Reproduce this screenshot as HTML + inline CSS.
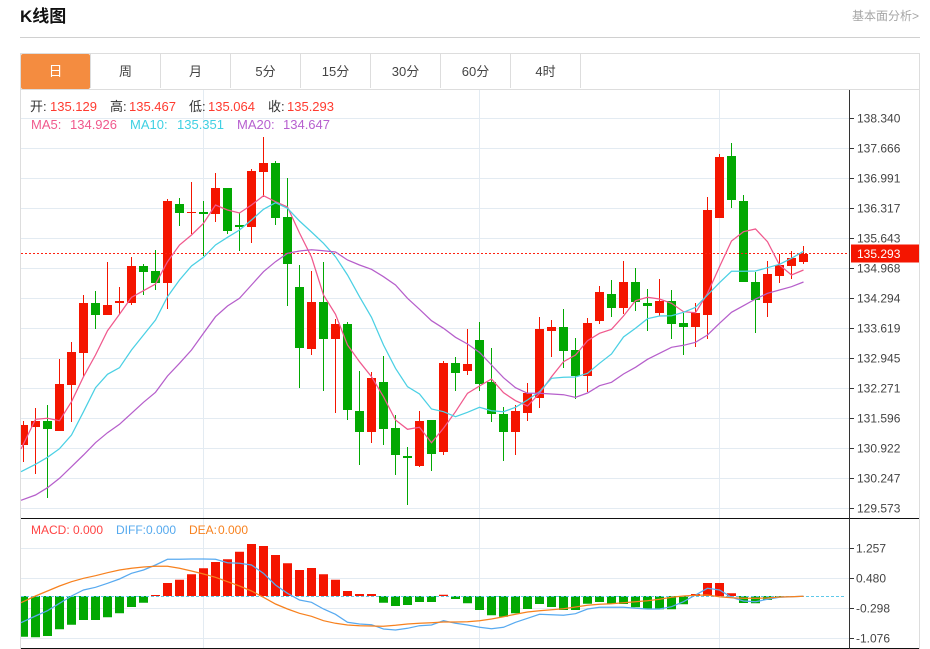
<!DOCTYPE html>
<html lang="zh">
<head>
<meta charset="utf-8">
<title>K线图</title>
<style>
html,body{margin:0;padding:0;background:#fff;width:930px;height:649px;overflow:hidden}
body{position:relative;font-family:"Liberation Sans","Noto Sans CJK SC",sans-serif}
.a{position:absolute;white-space:nowrap}
.tab{position:absolute;top:54px;height:34px;width:69px;line-height:35px;text-align:center;font-size:13px;color:#444;border-right:1px solid #ddd}
svg{position:absolute;left:0;top:0}
svg text{font-family:"Liberation Sans","Noto Sans CJK SC",sans-serif}
</style>
</head>
<body>
<div class="a" style="left:20px;top:5px;font-size:17px;font-weight:bold;line-height:24px;color:#111">K线图</div>
<div class="a" style="right:11px;top:8px;font-size:12px;line-height:16px;color:#a6a6a6">基本面分析&gt;</div>
<div class="a" style="left:20px;top:37px;width:900px;height:1px;background:#d0d0d0"></div>
<div class="a" style="left:20px;top:53px;width:898px;height:35px;border:1px solid #ddd;border-bottom:1px solid #ddd"></div>
<div class="a" style="left:21px;top:54px;width:69px;height:35px;background:#f48c40;border-radius:2px"></div>
<div class="tab" style="left:21px;color:#fff;border-right:1px solid #ddd;font-size:14px">日</div>
<div class="tab" style="left:91px">周</div>
<div class="tab" style="left:161px">月</div>
<div class="tab" style="left:231px">5分</div>
<div class="tab" style="left:301px">15分</div>
<div class="tab" style="left:371px">30分</div>
<div class="tab" style="left:441px">60分</div>
<div class="tab" style="left:511px">4时</div>

<svg width="930" height="649" viewBox="0 0 930 649" xmlns="http://www.w3.org/2000/svg">
<path d="M20.5 89V649M919.5 89V649" stroke="#ddd" fill="none"/>
<path d="M21 118.5H849M21 148.5H849M21 178.5H849M21 208.5H849M21 238.5H849M21 268.5H849M21 298.5H849M21 328.5H849M21 358.5H849M21 388.5H849M21 418.5H849M21 448.5H849M21 478.5H849M21 508.5H849M21 548.5H849M21 578.5H849M21 608.5H849M21 638.5H849M203.5 90V648M479.5 90V648M719.5 90V648" stroke="#e3ebf2" fill="none"/>

<!-- red wicks -->
<path fill="none" stroke="#f41500" d="M23.5 421V462M35.5 408V474M59.5 359V384M71.5 342V422M83.5 295V377M107.5 262V315M119.5 287V314M131.5 257V305M167.5 199V309M191.5 182V234M215.5 173V222M251.5 169V243M263.5 137V197M311.5 271V355M335.5 319V413M371.5 372V443M419.5 411V467M443.5 361V455M467.5 329V375M515.5 405V455M527.5 383V421M539.5 317V408M551.5 320V357M587.5 318V392M599.5 286V324M623.5 261V314M659.5 279V316M695.5 303V347M707.5 197V339M719.5 154V218M767.5 261V317M779.5 254V283M791.5 251V279M803.5 246V264"/>
<!-- green wicks -->
<path fill="none" stroke="#02a802" d="M47.5 405V498M95.5 291V329M143.5 264V295M155.5 250V290M179.5 198V226M203.5 201V256M227.5 188V234M239.5 213V251M275.5 161V225M287.5 178V306M299.5 265V388M323.5 262V391M347.5 322V420M359.5 371V465M383.5 356V445M395.5 415V475M407.5 447V505M431.5 420V471M455.5 357V391M479.5 322V391M491.5 348V422M503.5 407V461M563.5 309V368M575.5 338V399M611.5 280V317M635.5 268V311M647.5 289V331M671.5 290V339M683.5 313V355M731.5 143V208M743.5 195V282M755.5 272V333"/>
<!-- red bodies -->
<path fill="#f41500" d="M21 425h7v20h-7zM31 421h9v6h-9zM55 384h9v47h-9zM67 352h9v33h-9zM79 303h9v50h-9zM103 305h9v10h-9zM115 301h9v2h-9zM127 266h9v37h-9zM163 201h9v82h-9zM187 212h9v1h-9zM211 188h9v26h-9zM247 171h9v56h-9zM259 163h9v9h-9zM307 302h9v47h-9zM331 324h9v15h-9zM367 378h9v54h-9zM415 421h9v45h-9zM439 363h9v89h-9zM463 364h9v7h-9zM511 411h9v21h-9zM523 393h9v20h-9zM535 329h9v69h-9zM547 327h9v4h-9zM583 323h9v53h-9zM595 292h9v29h-9zM619 282h9v26h-9zM655 301h9v12h-9zM691 313h9v14h-9zM703 210h9v105h-9zM715 157h9v61h-9zM763 274h9v29h-9zM775 265h9v11h-9zM787 258h9v8h-9zM799 254h9v8h-9z"/>
<!-- green bodies -->
<path fill="#02a802" d="M43 421h9v8h-9zM91 303h9v12h-9zM139 266h9v6h-9zM151 271h9v12h-9zM175 204h9v9h-9zM199 212h9v2h-9zM223 188h9v43h-9zM235 225h9v2h-9zM271 163h9v55h-9zM283 217h9v47h-9zM295 287h9v61h-9zM319 302h9v37h-9zM343 324h9v86h-9zM355 411h9v21h-9zM379 382h9v47h-9zM391 428h9v27h-9zM403 456h9v2h-9zM427 420h9v34h-9zM451 363h9v10h-9zM475 340h9v44h-9zM487 382h9v32h-9zM499 414h9v18h-9zM559 327h9v24h-9zM571 350h9v26h-9zM607 294h9v14h-9zM631 282h9v20h-9zM643 303h9v3h-9zM667 301h9v23h-9zM679 323h9v4h-9zM727 156h9v44h-9zM739 201h9v81h-9zM751 282h9v18h-9z"/>

<path d="M21 253.5H849" stroke="#ff2010" stroke-dasharray="2 2" fill="none"/>

<!-- MA5 -->
<polyline fill="none" stroke="#f0598d" stroke-width="1.25" points="21,449 35.5,419.3 47.5,418.3 59.5,420.7 71.5,401.7 83.5,376.7 95.5,355 107.5,330.7 119.5,314.3 131.5,297.3 143.5,290.7 155.5,284 167.5,261.7 179.5,245 191.5,235 203.5,223.3 215.5,205 227.5,210 239.5,213 251.5,205 263.5,195.7 275.5,201.7 287.5,207 299.5,233 311.5,257 323.5,295 335.5,314.3 347.5,345 359.5,361.7 371.5,376.7 383.5,396.7 395.5,420 407.5,429.3 419.5,427.3 431.5,442.7 443.5,428.3 455.5,411.7 467.5,393.3 479.5,386 491.5,379 503.5,392.7 515.5,400.7 527.5,406 539.5,393.3 551.5,376.7 563.5,361.7 575.5,355 587.5,340.7 599.5,333.3 611.5,329.3 623.5,316 635.5,300.7 647.5,297.3 659.5,299 671.5,303.3 683.5,311.7 695.5,312.7 707.5,293.3 719.5,266.7 731.5,241 743.5,231.7 755.5,229 767.5,241.7 779.5,265 791.5,275 803.5,270"/>
<!-- MA10 -->
<polyline fill="none" stroke="#4bd0e4" stroke-width="1.25" points="21,471.7 35.5,464.3 47.5,457.3 59.5,448.7 71.5,435 83.5,411.7 95.5,387.7 107.5,374.3 119.5,367.7 131.5,350 143.5,335 155.5,320 167.5,296.7 179.5,280 191.5,266 203.5,257.3 215.5,245 227.5,237.3 239.5,230 251.5,220 263.5,209.3 275.5,202.7 287.5,208.3 299.5,221 311.5,232 323.5,243.3 335.5,256.7 347.5,275 359.5,296.7 371.5,317.3 383.5,345 395.5,368.3 407.5,386.7 419.5,394 431.5,409 443.5,411.7 455.5,416.7 467.5,412.3 479.5,407.3 491.5,410.7 503.5,411.7 515.5,407.3 527.5,400 539.5,391.7 551.5,378.3 563.5,377.3 575.5,377 587.5,373.3 599.5,363.3 611.5,354 623.5,337 635.5,328.3 647.5,318.7 659.5,316 671.5,315.7 683.5,312.3 695.5,307.3 707.5,295 719.5,282.7 731.5,271.3 743.5,271.3 755.5,271 767.5,267.7 779.5,264.3 791.5,258.3 803.5,251.3"/>
<!-- MA20 -->
<polyline fill="none" stroke="#b65fcb" stroke-width="1.25" points="21,500.3 35.5,495 47.5,487.7 59.5,478.3 71.5,466.7 83.5,455 95.5,442.7 107.5,432.7 119.5,424.3 131.5,413.3 143.5,402.3 155.5,392.3 167.5,376 179.5,363.3 191.5,350 203.5,333.3 215.5,316.7 227.5,306 239.5,298.3 251.5,285 263.5,271.7 275.5,261.7 287.5,253.3 299.5,251 311.5,249.7 323.5,250.7 335.5,252 347.5,260 359.5,265 371.5,269.3 383.5,276.7 395.5,285 407.5,298.3 419.5,309.3 431.5,320.7 443.5,328.3 455.5,337.3 467.5,344 479.5,352.3 491.5,365 503.5,377.7 515.5,387.7 527.5,393.3 539.5,393.3 551.5,394 563.5,394.7 575.5,397.3 587.5,393 599.5,385.7 611.5,382.3 623.5,374 635.5,367.3 647.5,359.3 659.5,353.3 671.5,347.3 683.5,345.3 695.5,342.3 707.5,335 719.5,323.3 731.5,312.3 743.5,305.7 755.5,299 767.5,293.3 779.5,290 791.5,286.7 803.5,282"/>

<!-- MACD bars -->
<path fill="#02a802" d="M21 596h7v40.700h-7zM31 596h9v41.300h-9zM43 596h9v40h-9zM55 596h9v33.300h-9zM67 596h9v28.700h-9zM79 596h9v24h-9zM91 596h9v24h-9zM103 596h9v21.300h-9zM115 596h9v17.300h-9zM127 596h9v11h-9zM139 596h9v6.700h-9zM379 596h9v6.700h-9zM391 596h9v10h-9zM403 596h9v9h-9zM415 596h9v6h-9zM427 596h9v6h-9zM451 596h9v3h-9zM463 596h9v7.300h-9zM475 596h9v14h-9zM487 596h9v19.300h-9zM499 596h9v20.700h-9zM511 596h9v17.300h-9zM523 596h9v13h-9zM535 596h9v8h-9zM547 596h9v11h-9zM559 596h9v14h-9zM571 596h9v14h-9zM583 596h9v7.700h-9zM595 596h9v6h-9zM607 596h9v7.700h-9zM619 596h9v8h-9zM631 596h9v11.300h-9zM643 596h9v13h-9zM655 596h9v13.300h-9zM667 596h9v13.300h-9zM679 596h9v8.300h-9zM739 596h9v7h-9zM751 596h9v7.300h-9zM763 596h9v4h-9zM775 596h9v1.300h-9z"/>
<path fill="#f41500" d="M151 595h9v1h-9zM163 583h9v13h-9zM175 579.700h9v16.300h-9zM187 574.300h9v21.700h-9zM199 568.300h9v27.700h-9zM211 562h9v34h-9zM223 559.300h9v36.700h-9zM235 551.700h9v44.300h-9zM247 544h9v52h-9zM259 546h9v50h-9zM271 555h9v41h-9zM283 563.300h9v32.700h-9zM295 570h9v26h-9zM307 568h9v28h-9zM319 574.300h9v21.700h-9zM331 579.700h9v16.300h-9zM343 591h9v5h-9zM355 594h9v2h-9zM367 594h9v2h-9zM439 594.700h9v1.300h-9zM691 594h9v2h-9zM703 583h9v13h-9zM715 583h9v13h-9zM727 593.300h9v2.700h-9z"/>
<path d="M21 596.500H846" stroke="#5ec8ea" stroke-dasharray="3 2" fill="none"/>
<!-- DIFF -->
<polyline fill="none" stroke="#58aaf0" stroke-width="1.25" points="21,622.7 35.5,616 47.5,610.7 59.5,603.3 71.5,596 83.5,590 95.5,587.3 107.5,583.3 119.5,579 131.5,573.3 143.5,570 155.5,565 167.5,559.300 179.5,559.300 191.5,559 203.5,559 215.5,559.3 227.5,562.7 239.5,563.3 251.5,565 263.5,573.3 275.5,585 287.5,593.3 299.5,600 311.5,602.3 323.5,609 335.5,614.3 347.5,622.3 359.5,624 371.5,624.7 383.5,629 395.5,630 407.5,628.3 419.5,625.7 431.5,625 443.5,620.7 455.5,623.3 467.5,625 479.5,627.3 491.5,628.7 503.5,627.3 515.5,622.3 527.5,618.3 539.5,614.3 551.5,614.7 563.5,615.3 575.5,613.7 587.5,609 599.5,607.3 611.5,607.3 623.5,607.3 635.5,608.3 647.5,609 659.5,609 671.5,606.7 683.5,601.7 695.5,595 707.5,588.3 719.5,590 731.5,597.3 743.5,601 755.5,601.7 767.5,599.3 779.5,597.3 791.5,596.700 803.5,596.3"/>
<!-- DEA -->
<polyline fill="none" stroke="#f7811e" stroke-width="1.25" points="21,602.7 35.5,596 47.5,591 59.5,586 71.5,581.7 83.5,578.3 95.5,575.7 107.5,572.7 119.5,570 131.5,568.3 143.5,567 155.5,566.3 167.5,566.3 179.5,568.3 191.5,571 203.5,574 215.5,577.3 227.5,581.7 239.5,586 251.5,591 263.5,597.3 275.5,604 287.5,609 299.5,613.3 311.5,616.3 323.5,620.7 335.5,623.3 347.5,625 359.5,625.700 371.5,626 383.5,626.3 395.5,625.3 407.5,624 419.5,623.3 431.5,622.7 443.5,622 455.5,622 467.5,621.7 479.5,620.7 491.5,619 503.5,616.7 515.5,614.3 527.5,612 539.5,610.7 551.5,609.7 563.5,608.7 575.5,607 587.5,605.3 599.5,604.3 611.5,603.7 623.5,602.700 635.5,601.7 647.5,600.7 659.5,599.3 671.5,597.3 683.5,596 695.5,595.3 707.5,595 719.5,596.7 731.5,597.7 743.5,598.3 755.5,598.3 767.5,598 779.5,597 791.5,596.700 803.5,596.3"/>

<!-- axes -->
<path d="M21 518.500H919M21 648.500H919" stroke="#111" fill="none"/>
<path d="M849.500 90V649" stroke="#333" fill="none"/>
<path d="M850 118.500h4M850 148.500h4M850 178.500h4M850 208.500h4M850 238.500h4M850 268.500h4M850 298.500h4M850 328.500h4M850 358.500h4M850 388.500h4M850 418.500h4M850 448.500h4M850 478.500h4M850 508.500h4M850 548.500h4M850 578.500h4M850 608.500h4M850 638.500h4" stroke="#333" fill="none"/>
<g font-size="12" fill="#444">
<text x="857" y="122.500">138.340</text>
<text x="857" y="152.500">137.666</text>
<text x="857" y="182.500">136.991</text>
<text x="857" y="212.500">136.317</text>
<text x="857" y="242.500">135.643</text>
<text x="857" y="272.500">134.968</text>
<text x="857" y="302.500">134.294</text>
<text x="857" y="332.500">133.619</text>
<text x="857" y="362.500">132.945</text>
<text x="857" y="392.500">132.271</text>
<text x="857" y="422.500">131.596</text>
<text x="857" y="452.500">130.922</text>
<text x="857" y="482.500">130.247</text>
<text x="857" y="512.500">129.573</text>
<text x="856" y="552.500">1.257</text>
<text x="856" y="582.500">0.480</text>
<text x="856" y="612.500">-0.298</text>
<text x="856" y="642.500">-1.076</text>
</g>
<rect x="851" y="244.500" width="68" height="18" fill="#f41500"/>
<text x="857" y="258" font-size="12" fill="#fff">135.293</text>

<!-- legends -->
<g font-size="13">
<text x="30" y="111" fill="#333">开:</text><text x="50" y="111" fill="#ff3b30">135.129</text>
<text x="110" y="111" fill="#333">高:</text><text x="129" y="111" fill="#ff3b30">135.467</text>
<text x="189" y="111" fill="#333">低:</text><text x="208" y="111" fill="#ff3b30">135.064</text>
<text x="268" y="111" fill="#333">收:</text><text x="287" y="111" fill="#ff3b30">135.293</text>
<text x="31" y="129" fill="#f0598d">MA5:</text><text x="70" y="129" fill="#f0598d">134.926</text>
<text x="130" y="129" fill="#3fd0e3">MA10:</text><text x="177" y="129" fill="#3fd0e3">135.351</text>
<text x="237" y="129" fill="#b760cf">MA20:</text><text x="283" y="129" fill="#b760cf">134.647</text>
</g>
<g font-size="12">
<text x="31" y="534" fill="#f44">MACD:</text><text x="73" y="534" fill="#f44">0.000</text>
<text x="116" y="534" fill="#55a9ee">DIFF:</text><text x="146" y="534" fill="#55a9ee">0.000</text>
<text x="189" y="534" fill="#f7811e">DEA:</text><text x="218" y="534" fill="#f7811e">0.000</text>
</g>
</svg>
</body>
</html>
